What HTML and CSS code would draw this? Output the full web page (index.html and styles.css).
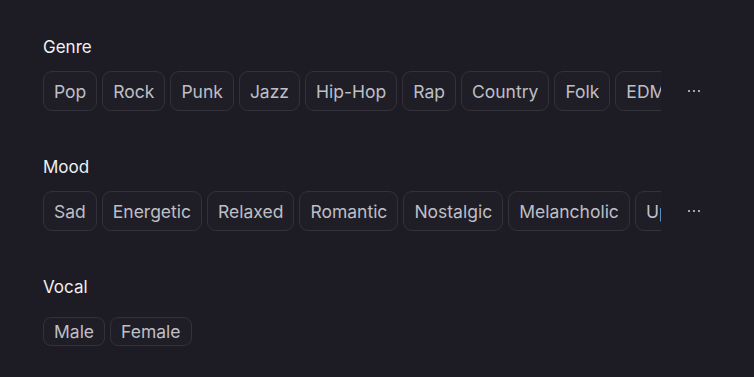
FILE: index.html
```html
<!DOCTYPE html>
<html lang="en">
<head>
  <meta charset="UTF-8">
  <title>Tags</title>
  <link rel="stylesheet" href="styles.css">
</head>
<body>
  <div class="panel">
    <div class="section">
      <div class="label">Genre</div>
      <div class="row">
        <div class="chips">
          <div class="chip">Pop</div>
          <div class="chip">Rock</div>
          <div class="chip">Punk</div>
          <div class="chip">Jazz</div>
          <div class="chip">Hip-Hop</div>
          <div class="chip">Rap</div>
          <div class="chip">Country</div>
          <div class="chip">Folk</div>
          <div class="chip">EDM</div>
          <div class="chip">Metal</div>
        </div>
        <button class="more" aria-label="More">
          <svg width="16" height="4" viewBox="0 0 16 4"><circle cx="2" cy="2" r="1.1"/><circle cx="7" cy="2" r="1.1"/><circle cx="12" cy="2" r="1.1"/></svg>
        </button>
      </div>
    </div>

    <div class="section">
      <div class="label">Mood</div>
      <div class="row">
        <div class="chips">
          <div class="chip">Sad</div>
          <div class="chip">Energetic</div>
          <div class="chip">Relaxed</div>
          <div class="chip">Romantic</div>
          <div class="chip">Nostalgic</div>
          <div class="chip">Melancholic</div>
          <div class="chip">Uplifting</div>
        </div>
        <button class="more" aria-label="More">
          <svg width="16" height="4" viewBox="0 0 16 4"><circle cx="2" cy="2" r="1.1"/><circle cx="7" cy="2" r="1.1"/><circle cx="12" cy="2" r="1.1"/></svg>
        </button>
      </div>
    </div>

    <div class="section">
      <div class="label">Vocal</div>
      <div class="chips small">
        <div class="chip">Male</div>
        <div class="chip">Female</div>
      </div>
    </div>
  </div>
</body>
</html>
```

FILE: styles.css
```css
body {
  margin: 0;
  background: #1d1c24;
  font-family: Inter, "Noto Sans", sans-serif;
}
.panel {
  padding: 35px 43px;
  display: flex;
  flex-direction: column;
  gap: 44px;
}
.label {
  color: #f0f0f4;
  font-size: 17px;
  line-height: 24px;
  margin-bottom: 12px;
}
.row {
  display: flex;
  align-items: center;
}
.chips {
  display: flex;
  gap: 5px;
  width: 618px;
  overflow: hidden;
  flex-shrink: 0;
}
.chip {
  flex-shrink: 0;
  height: 40px;
  box-sizing: border-box;
  padding: 1px 10px 0;
  display: flex;
  align-items: center;
  border: 1px solid #33323b;
  border-radius: 9px;
  background: #1f1e26;
  color: #bebec6;
  font-size: 17.5px;
}
.chips.small {
  margin-top: 18px;
  width: auto;
}
.chips.small .chip {
  height: 29px;
  border-radius: 8px;
  padding: 0 10px;
}
.more {
  margin-left: 25px;
  width: 18px;
  height: 20px;
  padding: 0;
  border: 0;
  background: none;
  display: flex;
  align-items: center;
  justify-content: center;
  fill: #c4c4cc;
}
```
